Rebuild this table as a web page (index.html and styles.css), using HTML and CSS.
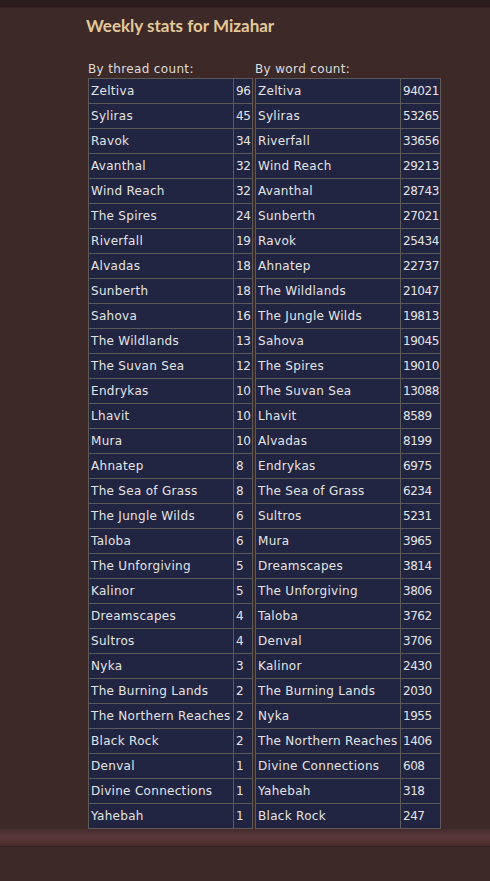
FILE: index.html
```html
<!DOCTYPE html>
<html lang="en">
<head>
<meta charset="utf-8">
<title>Weekly stats for Mizahar</title>
<link rel="stylesheet" href="styles.css">
</head>
<body>
<div class="topbar"></div>
<main class="content">
  <h2 class="title">Weekly stats for Mizahar</h2>
  <div class="stats">
    <section class="block">
      <div class="label">By thread count:</div>
      <table class="grid grid-threads">
        <colgroup><col class="c-name"><col class="c-num-s"></colgroup>
        <tbody>
          <tr><td>Zeltiva</td><td>96</td></tr>
          <tr><td>Syliras</td><td>45</td></tr>
          <tr><td>Ravok</td><td>34</td></tr>
          <tr><td>Avanthal</td><td>32</td></tr>
          <tr><td>Wind Reach</td><td>32</td></tr>
          <tr><td>The Spires</td><td>24</td></tr>
          <tr><td>Riverfall</td><td>19</td></tr>
          <tr><td>Alvadas</td><td>18</td></tr>
          <tr><td>Sunberth</td><td>18</td></tr>
          <tr><td>Sahova</td><td>16</td></tr>
          <tr><td>The Wildlands</td><td>13</td></tr>
          <tr><td>The Suvan Sea</td><td>12</td></tr>
          <tr><td>Endrykas</td><td>10</td></tr>
          <tr><td>Lhavit</td><td>10</td></tr>
          <tr><td>Mura</td><td>10</td></tr>
          <tr><td>Ahnatep</td><td>8</td></tr>
          <tr><td>The Sea of Grass</td><td>8</td></tr>
          <tr><td>The Jungle Wilds</td><td>6</td></tr>
          <tr><td>Taloba</td><td>6</td></tr>
          <tr><td>The Unforgiving</td><td>5</td></tr>
          <tr><td>Kalinor</td><td>5</td></tr>
          <tr><td>Dreamscapes</td><td>4</td></tr>
          <tr><td>Sultros</td><td>4</td></tr>
          <tr><td>Nyka</td><td>3</td></tr>
          <tr><td>The Burning Lands</td><td>2</td></tr>
          <tr><td>The Northern Reaches</td><td>2</td></tr>
          <tr><td>Black Rock</td><td>2</td></tr>
          <tr><td>Denval</td><td>1</td></tr>
          <tr><td>Divine Connections</td><td>1</td></tr>
          <tr><td>Yahebah</td><td>1</td></tr>
        </tbody>
      </table>
    </section>
    <section class="block">
      <div class="label">By word count:</div>
      <table class="grid grid-words">
        <colgroup><col class="c-name"><col class="c-num-l"></colgroup>
        <tbody>
          <tr><td>Zeltiva</td><td>94021</td></tr>
          <tr><td>Syliras</td><td>53265</td></tr>
          <tr><td>Riverfall</td><td>33656</td></tr>
          <tr><td>Wind Reach</td><td>29213</td></tr>
          <tr><td>Avanthal</td><td>28743</td></tr>
          <tr><td>Sunberth</td><td>27021</td></tr>
          <tr><td>Ravok</td><td>25434</td></tr>
          <tr><td>Ahnatep</td><td>22737</td></tr>
          <tr><td>The Wildlands</td><td>21047</td></tr>
          <tr><td>The Jungle Wilds</td><td>19813</td></tr>
          <tr><td>Sahova</td><td>19045</td></tr>
          <tr><td>The Spires</td><td>19010</td></tr>
          <tr><td>The Suvan Sea</td><td>13088</td></tr>
          <tr><td>Lhavit</td><td>8589</td></tr>
          <tr><td>Alvadas</td><td>8199</td></tr>
          <tr><td>Endrykas</td><td>6975</td></tr>
          <tr><td>The Sea of Grass</td><td>6234</td></tr>
          <tr><td>Sultros</td><td>5231</td></tr>
          <tr><td>Mura</td><td>3965</td></tr>
          <tr><td>Dreamscapes</td><td>3814</td></tr>
          <tr><td>The Unforgiving</td><td>3806</td></tr>
          <tr><td>Taloba</td><td>3762</td></tr>
          <tr><td>Denval</td><td>3706</td></tr>
          <tr><td>Kalinor</td><td>2430</td></tr>
          <tr><td>The Burning Lands</td><td>2030</td></tr>
          <tr><td>Nyka</td><td>1955</td></tr>
          <tr><td>The Northern Reaches</td><td>1406</td></tr>
          <tr><td>Divine Connections</td><td>608</td></tr>
          <tr><td>Yahebah</td><td>318</td></tr>
          <tr><td>Black Rock</td><td>247</td></tr>
        </tbody>
      </table>
    </section>
  </div>
</main>
<div class="footbar"></div>
</body>
</html>
```
FILE: styles.css
```css
html, body {
  margin: 0;
  padding: 0;
}
body {
  background: #3d2a28;
  font-family: "DejaVu Sans", Verdana, sans-serif;
  color: #e2e2e2;
}
.topbar {
  height: 7px;
  background: #2a1e1d;
  border-bottom: 1px solid #33221f;
}
.content {
  padding: 8px 0 0 86px;
}
.title {
  margin: 0;
  font-family: Lato, "DejaVu Sans", sans-serif;
  font-weight: 700;
  font-size: 17px;
  line-height: 20px;
  color: #e3c89a;
}
.stats {
  display: flex;
  gap: 2px;
  padding-left: 2px;
  margin-top: 25px;
}
.label {
  font-size: 12px;
  line-height: 17px;
  letter-spacing: 0.35px;
  color: #dcdcdc;
}
.grid {
  border-spacing: 0;
  table-layout: fixed;
  background: #222541;
  border-left: 1px solid #5c5a58;
  border-top: 1px solid #5c5a58;
  font-size: 12px;
  letter-spacing: 0.3px;
}
.grid-threads { width: 165px; }
.grid-words { width: 186px; }
.c-name { width: 145px; }
.c-num-s { width: 19px; }
.c-num-l { width: 40px; }
.grid td {
  height: 24px;
  padding: 0 2px;
  border-right: 1px solid #5c5a58;
  border-bottom: 1px solid #5c5a58;
  white-space: nowrap;
  overflow: hidden;
  vertical-align: middle;
  color: #e4e4e4;
}
.grid td + td {
  padding: 0 0 0 2px;
  letter-spacing: -0.45px;
}
.footbar {
  height: 17px;
  background: linear-gradient(to bottom, #452c2d 0%, #5a3739 40%, #563436 70%, #452b2c 100%);
  border-bottom: 1px solid #33221f;
}
```
